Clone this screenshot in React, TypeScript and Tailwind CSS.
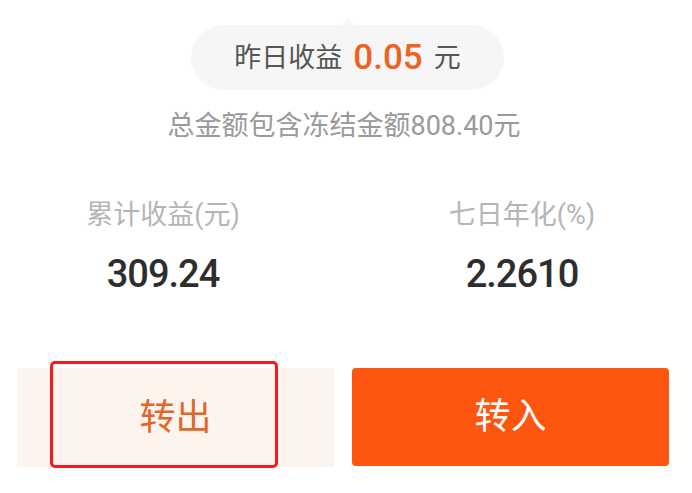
import React from 'react';

const font = 'font-["Roboto","Noto_Sans_CJK_SC",sans-serif]';

export default function App() {
  return (
    <div className={`w-[692px] h-[493px] bg-white overflow-hidden ${font}`}>
      {/* yesterday earnings pill */}
      <div className="flex justify-center pt-[25px] pl-[3px]">
        <div className="relative flex items-center justify-center w-[313px] h-[65px] rounded-full bg-[#f6f6f6]">
          <div className="absolute -top-[6px] left-1/2 -translate-x-1/2 w-0 h-0 border-l-[7px] border-r-[7px] border-b-[6px] border-l-transparent border-r-transparent border-b-[#f6f6f6]" />
          <span className="text-[27px] leading-[40px] text-[#555555]">昨日收益</span>
          <span className="ml-[11px] text-[35px] leading-none font-medium text-[#f0601e]">0.05</span>
          <span className="ml-[11px] text-[27px] leading-[40px] text-[#555555]">元</span>
        </div>
      </div>

      <p className="mt-[16px] text-center text-[27px] leading-[40px] text-[#9a9a9a] pr-[4px]">
        总金额包含冻结金额808.40元
      </p>

      {/* stats */}
      <div className="flex justify-between pl-[63px] pr-[70px] mt-[49px]">
        <div className="w-[200px] flex flex-col items-center">
          <span className="text-[27px] leading-[40px] text-[#b5b5b5]">累计收益(元)</span>
          <span className="mt-[15px] text-[38px] leading-[48px] font-medium tracking-[-1px] text-[#2e2e2e]">309.24</span>
        </div>
        <div className="w-[200px] flex flex-col items-center">
          <span className="text-[27px] leading-[40px] text-[#b5b5b5]">七日年化(%)</span>
          <span className="mt-[15px] text-[38px] leading-[48px] font-medium tracking-[-1px] text-[#2e2e2e]">2.2610</span>
        </div>
      </div>

      {/* actions */}
      <div className="relative flex gap-[18px] pl-[17px] mt-[70px]">
        <button className="w-[317px] h-[99px] bg-[#fdf4ee] text-[36px] text-[#e0672a]">
          转出
        </button>
        <button className="w-[317px] h-[98px] rounded-[4px] bg-[#fe5510] text-[36px] text-white">
          转入
        </button>
        <div className="absolute left-[50px] -top-[7px] w-[228px] h-[107px] rounded-[5px] border-[3px] border-[#f51b1b] pointer-events-none" />
      </div>
    </div>
  );
}
